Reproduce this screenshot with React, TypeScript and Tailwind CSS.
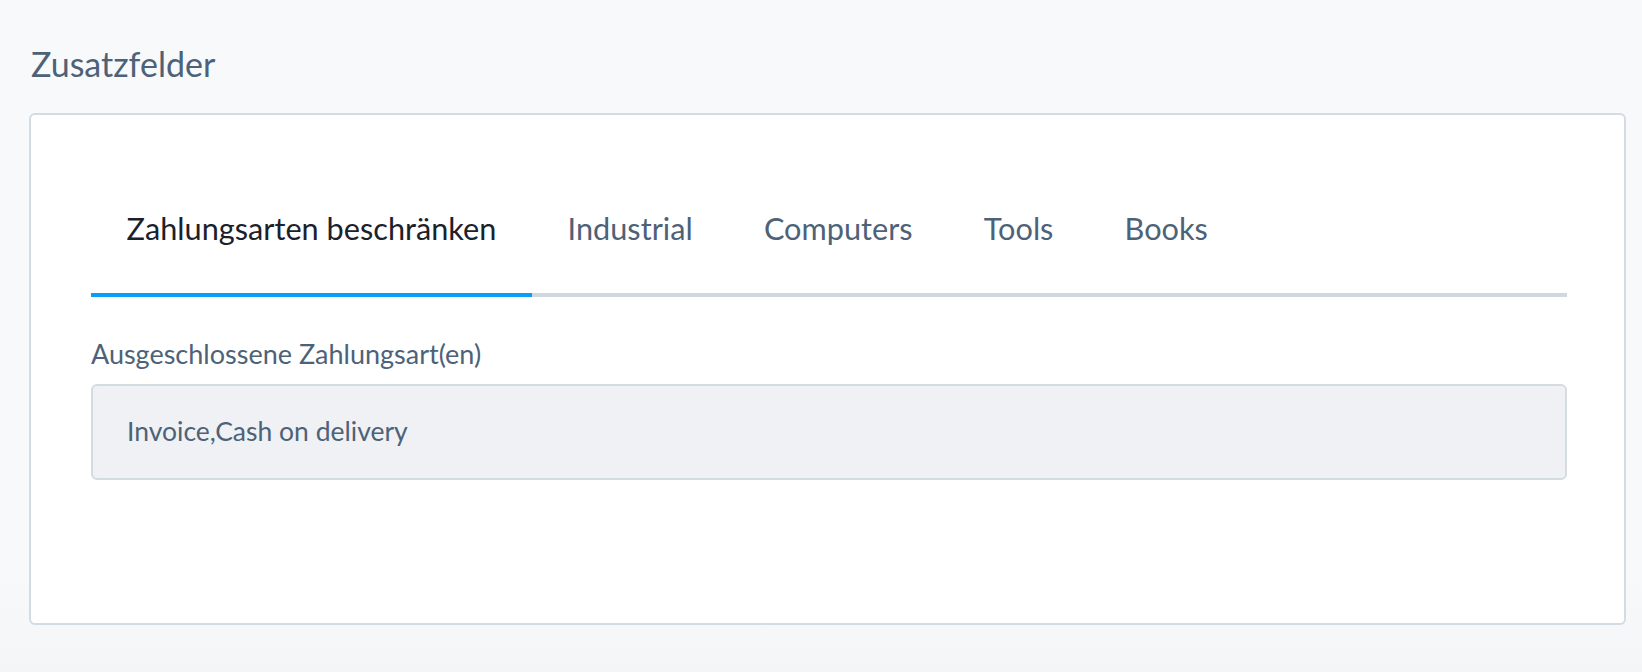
import { useState } from "react";

const tabs = ["Zahlungsarten beschränken", "Industrial", "Computers", "Tools", "Books"];

export default function App() {
  const [active, setActive] = useState(0);

  return (
    <div
      className="min-h-[672px] w-full bg-gradient-to-b from-[#f8f9fb] from-85% to-[#f4f5f7] pt-[44px] pl-[29px] pr-[16px] pb-[47px]"
      style={{ fontFamily: "Lato, 'Noto Sans', sans-serif" }}
    >
      <h2 className="pl-[2px] text-[34px] leading-[40px] font-normal text-[#4d6278]">Zusatzfelder</h2>

      <div className="mt-[29px] h-[512px] rounded-[6px] border-2 border-[#d3dbe3] bg-white pl-[60px] pr-[57px] pt-[94px]">
        <div className="flex border-b-4 border-[#cfd8e0]">
          {tabs.map((tab, i) => (
            <button
              key={tab}
              onClick={() => setActive(i)}
              className={
                i === active
                  ? "-mb-1 border-b-4 border-[#0a9ff5] px-[35.6px] pb-[44px] text-[30.7px] leading-[40px] text-[#1b212b]"
                  : "-mb-1 border-b-4 border-transparent px-[35.6px] pb-[44px] text-[30.7px] leading-[40px] text-[#4d6278]"
              }
            >
              {tab}
            </button>
          ))}
        </div>

        <label className="mt-[40px] block text-[27px] leading-[34px] text-[#4d6278]">
          Ausgeschlossene Zahlungsart(en)
        </label>
        <div className="mt-[13px] flex h-[96px] items-center rounded-[6px] border-2 border-[#d3dbe3] bg-[#eff1f5] px-[34px] text-[26.5px] text-[#4d6278]">
          Invoice,Cash on delivery
        </div>
      </div>
    </div>
  );
}
